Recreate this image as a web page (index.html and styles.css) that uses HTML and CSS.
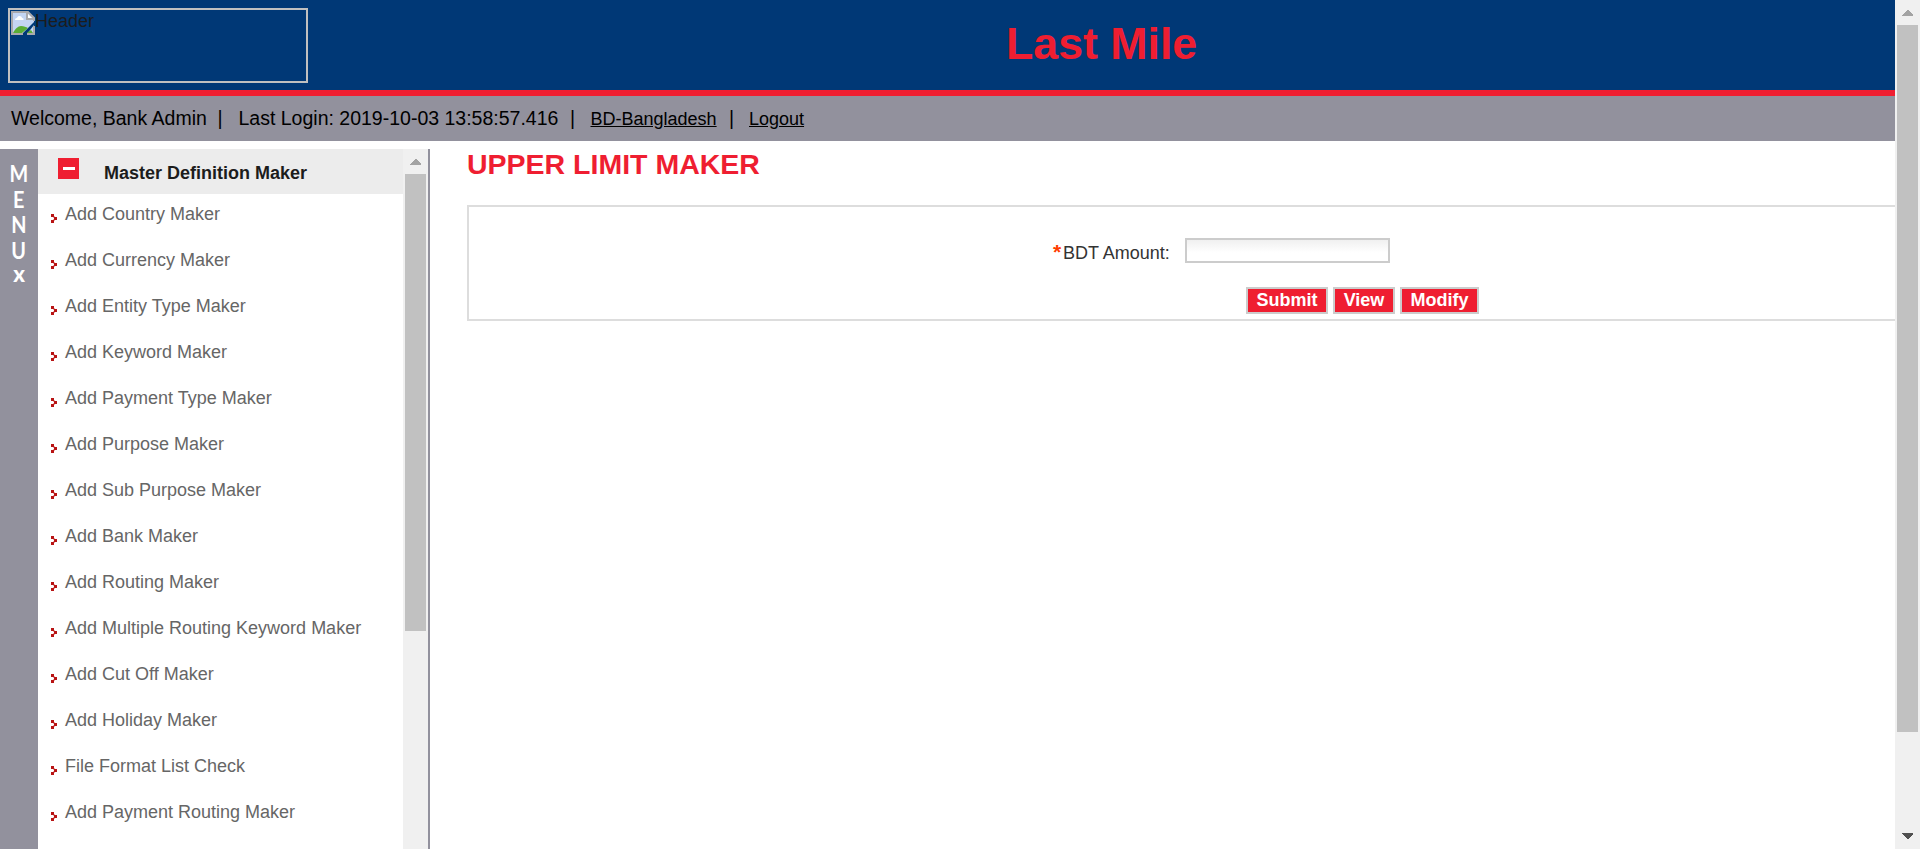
FILE: index.html
```
<!DOCTYPE html>
<html lang="en">
<head>
<meta charset="utf-8">
<title>Last Mile</title>
<link rel="stylesheet" href="styles.css">
</head>
<body>
<svg class="defs" width="0" height="0">
  <symbol id="bullet" viewBox="0 0 6 9">
    <path fill="#b81414" d="M0 0h3v3H0zM3 3h3v3H3zM0 6h3v3H0z"/>
    <path fill="#e9a3a3" d="M3 2h1v1H3zM2 3h1v1H2zM2 5h1v1H2zM3 6h1v1H3z"/>
  </symbol>
</svg>
<div class="page">
  <div class="main">
    <header class="banner">
      <div class="logo">
        <svg class="broken" width="24" height="24" viewBox="0 0 24 24">
          <path fill="#c4d5f3" d="M1 1h16l6 6v4L11 23H1z"/>
          <path fill="#fff" d="M4 9c0-2 2-2 2-2 1-3 5-2 5 0 2 0 2 2 1 2z"/>
          <path fill="#5aad35" d="M2 22c2-4 5-7 8-7s5 1 7 2l-6 5z"/>
          <path fill="#fff" d="M16 2v6h6z"/>
          <path fill="none" stroke="#a9a9ad" stroke-width="2" d="M12 23H1V1h16l6 6v3M16 1v7h7"/>
          <path fill="#c4d5f3" d="M23 14v9h-7z"/>
          <path fill="#5aad35" d="M17 21l3-2 2 3h-6z"/>
          <path fill="none" stroke="#a9a9ad" stroke-width="2" d="M16 23h7v-8"/>
        </svg>
        <span>Header</span>
      </div>
      <h1>Last Mile</h1>
    </header>
    <div class="status">
      <span class="welcome">Welcome, Bank Admin</span><span class="bar first">|</span>
      <span class="login">Last Login: 2019-10-03 13:58:57.416</span><span class="bar second">|</span>
      <a class="country">BD-Bangladesh</a><span class="bar">|</span>
      <a>Logout</a>
    </div>
    <div class="content">
      <div class="menu-strip"><span>M</span><span>E</span><span>N</span><span>U</span><b>x</b></div>
      <nav class="side">
        <div class="side-head"><i class="toggle"></i><span>Master Definition Maker</span></div>
        <ul>
          <li><svg><use href="#bullet"/></svg>Add Country Maker</li>
          <li><svg><use href="#bullet"/></svg>Add Currency Maker</li>
          <li><svg><use href="#bullet"/></svg>Add Entity Type Maker</li>
          <li><svg><use href="#bullet"/></svg>Add Keyword Maker</li>
          <li><svg><use href="#bullet"/></svg>Add Payment Type Maker</li>
          <li><svg><use href="#bullet"/></svg>Add Purpose Maker</li>
          <li><svg><use href="#bullet"/></svg>Add Sub Purpose Maker</li>
          <li><svg><use href="#bullet"/></svg>Add Bank Maker</li>
          <li><svg><use href="#bullet"/></svg>Add Routing Maker</li>
          <li><svg><use href="#bullet"/></svg>Add Multiple Routing Keyword Maker</li>
          <li><svg><use href="#bullet"/></svg>Add Cut Off Maker</li>
          <li><svg><use href="#bullet"/></svg>Add Holiday Maker</li>
          <li><svg><use href="#bullet"/></svg>File Format List Check</li>
          <li><svg><use href="#bullet"/></svg>Add Payment Routing Maker</li>
        </ul>
      </nav>
      <div class="scrollbar side-scroll">
        <svg class="arrow" width="11" height="6" shape-rendering="crispEdges"><path fill="#a3a3a3" d="M5 0h1l5 5v1H0V5z"/></svg>
        <div class="thumb"></div>
      </div>
      <section class="work">
        <h2>UPPER LIMIT MAKER</h2>
        <div class="form">
          <div class="row"><label><em>*</em>BDT Amount:</label><input type="text"></div>
          <div class="buttons"><button class="submit">Submit</button><button class="view">View</button><button class="modify">Modify</button></div>
        </div>
      </section>
    </div>
  </div>
  <div class="scrollbar page-scroll">
    <svg class="arrow" width="11" height="6" shape-rendering="crispEdges"><path fill="#a3a3a3" d="M5 0h1l5 5v1H0V5z"/></svg>
    <div class="thumb"></div>
    <svg class="arrow down" width="11" height="6" shape-rendering="crispEdges"><path fill="#505050" d="M0 0h11v1L6 6H5L0 1z"/></svg>
  </div>
</div>
</body>
</html>
```
FILE: styles.css
```
* { box-sizing: border-box; }
body {
  margin: 0;
  height: 849px;
  overflow: hidden;
  background: #fff;
  font: 18px/20px "Liberation Sans", Arial, sans-serif;
  color: #1c1c1c;
}
.defs { position: absolute; }
.page { display: flex; height: 849px; }
.main { width: 1895px; display: flex; flex-direction: column; overflow: hidden; }
.banner {
  height: 96px;
  flex: none;
  display: flex;
  padding-left: 8px;
  background: #003876;
  border-bottom: 6px solid #ef1e31;
}
.logo {
  display: flex;
  width: 300px;
  height: 75px;
  margin-top: 8px;
  padding: 1px;
  border: 2px solid #c0c0c0;
}
.banner h1 {
  margin: 18px 0 0 698px;
  font-size: 44.7px;
  line-height: 52px;
  color: #ef1e31;
}
.status {
  height: 45px;
  flex: none;
  display: flex;
  align-items: baseline;
  padding: 10px 0 0 11px;
  background: #92919d;
  color: #000;
  font-size: 19.5px;
  line-height: 24px;
}
.status a { font-size: 18px; text-decoration: underline; }
.bar { width: 20px; }
.bar.first { width: 21px; }
.bar.second { width: 20.5px; }
.welcome { width: 206.5px; }
.login { width: 331.5px; }
.country { width: 138.5px; }
.content { display: flex; flex: 1; margin-top: 8px; min-height: 0; }
.menu-strip {
  width: 38px;
  flex: none;
  display: flex;
  flex-direction: column;
  align-items: center;
  padding-top: 12px;
  background: #92919d;
  color: #fff;
  font: 600 22px/25.7px Lato, sans-serif;
}
.menu-strip span { font-size: 23px; transform: scaleX(.86); font-weight: 700; }
.menu-strip b { font-weight: 900; font-size: 22px; line-height: 20px; }
.side { width: 365px; flex: none; overflow: hidden; }
.side-head {
  display: flex;
  height: 45px;
  padding: 9px 0 0 20px;
  background: #ececec;
  font-weight: bold;
}
.side-head span { margin: 5px 0 0 25px; }
.toggle {
  width: 21px;
  height: 21px;
  background: linear-gradient(#fff, #fff) 5px 9px / 12px 3px no-repeat #ef1e31;
}
.side ul { list-style: none; margin: 0; padding: 10px 0 0 13px; }
.side li { display: flex; gap: 8px; height: 46px; color: #666; white-space: nowrap; }
.side li svg { width: 6px; height: 9px; margin-top: 10px; }
.scrollbar {
  width: 25px;
  flex: none;
  display: flex;
  flex-direction: column;
  align-items: center;
  background: #f0f0f0;
}
.scrollbar .arrow { margin-top: 10px; flex: none; }
.scrollbar .thumb { width: 21px; margin-top: 9px; background: #c1c1c1; flex: none; }
.side-scroll .thumb { height: 457px; }
.page-scroll .thumb { height: 707px; }
.scrollbar .down { margin-top: 101px; }
.work { flex: 1; border-left: 2px solid #92919d; padding-left: 37px; min-width: 0; }
.work h2 {
  margin: 0;
  font-size: 28.5px;
  line-height: 31px;
  color: #ef1e31;
}
.form {
  width: 1500px;
  height: 116px;
  margin-top: 25px;
  border: 2px solid #ddd;
  padding-top: 31px;
}
.row { display: flex; padding-left: 584px; height: 49px; }
.row label { width: 132px; padding-top: 5px; color: #333; white-space: nowrap; }
.row em {
  display: inline-block;
  width: 10px;
  font: bold 21px/18px "Liberation Sans", Arial, sans-serif;
  color: #ff3c00;
}
.row input {
  width: 205px;
  height: 25px;
  margin: 0;
  border: 2px solid #ccc;
  background: linear-gradient(#f0f0f0, #fff 60%);
}
.buttons { display: flex; gap: 5px; padding-left: 777px; }
.buttons button {
  height: 27px;
  padding: 0 0 2px;
  border: 2px solid #ccc;
  background: #ef1e31;
  color: #fff;
  font: bold 18px/20px "Liberation Sans", Arial, sans-serif;
}
.submit { width: 82px; }
.view { width: 62px; }
.modify { width: 79px; }
```
